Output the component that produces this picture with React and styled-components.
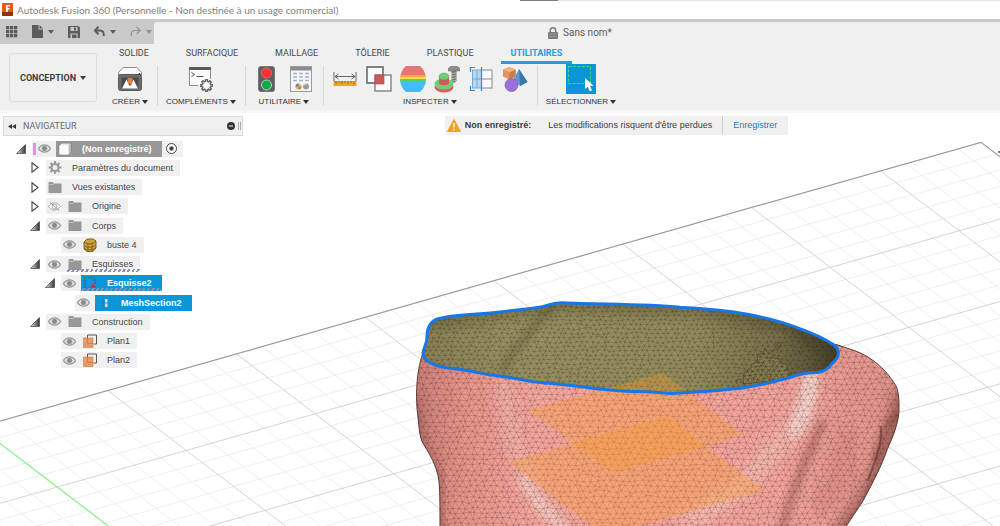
import React from "react";
import styled, { createGlobalStyle, css } from "styled-components";

const GlobalStyle = createGlobalStyle`
  *, *::before, *::after { box-sizing: border-box; }
  html, body { margin: 0; height: 100%; }
  #root { height: 100%; }
  body { background: #fff; font-family: "Liberation Sans", Arial, sans-serif; color: #3c3c3c; }
  button { font: inherit; color: inherit; background: none; border: 0; padding: 0; margin: 0; cursor: pointer; }
  ul { list-style: none; margin: 0; padding: 0; }
  svg { display: block; flex: none; }
`;

const Page = styled.div`
  display: flex;
  flex-direction: column;
  min-height: 100%;
`;

/* ---------- Title bar ---------- */

const WindowEdge = styled.div`
  display: grid;
  grid-template-columns: 52% 38px 1fr;
  height: 1px;
  span:nth-child(2) { background: #7d7d7d; }
  span:nth-child(3) { background: #e4e4e4; }
`;

const TitleBar = styled.header`
  display: flex;
  align-items: center;
  gap: 4px;
  height: 18px;
  padding-left: 2px;
  background: #fff;
  color: #808080;
  font: 10px/16px Lato, "Noto Sans", sans-serif;
`;

/* ---------- Quick access bar ---------- */

const QuickBar = styled.div`
  display: flex;
  height: 25px;
  padding-top: 3px;
  background: #c9c9c9;
`;

const QuickTools = styled.div`
  display: flex;
  align-items: center;
  gap: 14px;
  width: 154px;
  padding: 0 0 3px 6px;
`;

const QuickButton = styled.button`
  display: flex;
  align-items: center;
  gap: 5px;
  color: ${(p) => (p.$faded ? "#929292" : "#5c5c5c")};
`;

const Caret = styled.span`
  display: inline-block;
  border: 3px solid transparent;
  border-top: 4px solid currentColor;
  border-bottom: 0;
`;

const DocumentTab = styled.div`
  flex: 1;
  display: flex;
  align-items: center;
  justify-content: center;
  gap: 5px;
  padding-left: 6px;
  border-top-left-radius: 3px;
  background: #f0f0f0;
  color: #5c5c5c;
  font: 10px/14px Roboto, sans-serif;
`;

/* ---------- Ribbon ---------- */

const Ribbon = styled.div`
  display: grid;
  grid-template-columns: 103px 1fr;
  height: 69px;
  background: #f0f0f0;
  border-bottom: 3px solid #f5f5f5;
`;

const WorkspaceButton = styled.button`
  display: flex;
  align-items: center;
  justify-content: center;
  gap: 4px;
  height: 49px;
  margin: 9px 6px 0 9px;
  border: 1px solid #dedede;
  border-radius: 3px;
  font: bold 9px/12px Roboto, sans-serif;
`;

const Tabs = styled.nav`
  display: flex;
  gap: 17px;
  height: 20px;
  padding-left: 6px;
`;

const Tab = styled.button`
  height: 20px;
  padding: 0 10px;
  border-bottom: 3px solid transparent;
  color: #4a4a4a;
  font: 9px/18px Roboto, sans-serif;
  ${(p) => p.$active && css`
    color: #1f9ede;
    font-weight: bold;
    border-color: #1f9ede;
  `}
`;

const ToolRow = styled.div`
  display: flex;
`;

const ToolGroup = styled.section`
  display: flex;
  flex-direction: column;
  align-items: center;
  padding: 0 9px;
  position: relative;
  & + &::before {
    content: "";
    position: absolute;
    left: 0;
    top: 2px;
    width: 1px;
    height: 40px;
    background: #d8d8d8;
  }
`;

const ToolIcons = styled.div`
  display: flex;
  align-items: center;
  gap: 8px;
  height: 30px;
`;

const ToolButton = styled.button`
  display: grid;
  place-items: center;
  width: ${(p) => (p.$selected ? 30 : 26)}px;
  height: 30px;
  background: ${(p) => (p.$selected ? "#0a96d9" : "transparent")};
`;

const GroupMenu = styled.button`
  display: flex;
  align-items: center;
  gap: 2px;
  color: #333;
  font: 8px/16px "Liberation Sans", Arial, sans-serif;
`;

/* ---------- Work area ---------- */

const WorkArea = styled.main`
  position: relative;
  flex: 1;
  display: grid;
  grid-template-columns: 243px 1fr;
  align-items: start;
  padding-top: 3px;
  overflow: hidden;
`;

const Canvas = styled.svg`
  position: absolute;
  inset: 0;
  width: 100%;
  height: 100%;
`;

const Navigator = styled.aside`
  position: relative;
  padding-left: 3px;
`;

const NavigatorHeader = styled.div`
  display: flex;
  align-items: center;
  gap: 7px;
  height: 20px;
  padding: 0 1px 0 4px;
  background: #f0f0f0;
  border: 1px solid #dadada;
  color: #6a6a6a;
  font: 9px/18px Roboto, sans-serif;
  h2 { flex: 1; margin: 0; font: inherit; }
`;

const Tree = styled.ul`
  display: grid;
  grid-auto-rows: 1fr;
  height: 231px;
  margin-top: 3px;
`;

const Row = styled.li`
  display: flex;
  align-items: center;
  padding-left: ${(p) => p.$indent}px;
`;

const Twist = styled.button`
  display: grid;
  place-items: center;
  width: 10px;
  height: 12px;
  margin-right: 6px;
`;

const Chip = styled.div`
  display: flex;
  align-items: center;
  height: 16px;
  background: #f0f0f0;
`;

const Mark = styled.span`
  width: 3px;
  height: 12px;
  margin-left: 1px;
  background: #e78ee7;
`;

const EyeButton = styled.button`
  display: grid;
  place-items: center start;
  width: 20px;
  height: 16px;
  padding-left: 2px;
`;

const ItemLabel = styled.div`
  position: relative;
  display: flex;
  align-items: center;
  gap: 10px;
  height: 16px;
  padding: 0 7px 0 2px;
  font: 9px/16px "Liberation Sans", Arial, sans-serif;
  white-space: nowrap;
  color: #444;
  ${(p) => p.$tone && css`
    padding-right: 10px;
    background: ${p.$tone};
    color: #fff;
    font-weight: bold;
  `}
  ${(p) => p.$hatched && css`
    &::after {
      content: "";
      position: absolute;
      inset: auto 0 0 0;
      height: 3px;
      background: repeating-linear-gradient(120deg, transparent 0 2px, #8793b4 2px 4px);
    }
  `}
`;

const ActiveRadio = styled.input`
  appearance: none;
  width: 11px;
  height: 11px;
  margin: 0 6px 0 4px;
  border: 1px solid #444;
  border-radius: 50%;
  background: radial-gradient(circle, #333 0 1px, #fff 3px);
`;

const Notice = styled.div`
  position: relative;
  justify-self: center;
  display: flex;
  align-items: center;
  height: 19px;
  margin-right: 10px;
  padding: 0 11px 0 2px;
  background: #f0f0f0;
  font: 9px/19px "Liberation Sans", Arial, sans-serif;
  strong { margin: 0 17px 0 4px; }
  a {
    margin-left: 10px;
    padding-left: 10px;
    border-left: 1px solid #cfcfcf;
    color: #1b7fc0;
    text-decoration: none;
  }
`;

/* ---------- Icons ---------- */

const AppLogo = () => (
  <svg width="11" height="14" viewBox="0 0 11 14">
    <rect width="11" height="13" rx="1" fill="#e8590c" />
    <path d="M0 9h11v3a1 1 0 0 1-1 1H1a1 1 0 0 1-1-1z" fill="#8f3206" />
    <path d="M4 2h4v1.6H5.700v1.400H7.600v1.500H5.700V9H4z" fill="#fff" />
  </svg>
);

const GridIcon = () => (
  <svg width="12" height="12" viewBox="0 0 12 12" fill="currentColor">
    {[0, 4, 8].map((y) => [0, 4, 8].map((x) => <rect key={x + "-" + y} x={x} y={y} width="3.300" height="3.300" />))}
  </svg>
);

const FileIcon = () => (
  <svg width="11" height="13" viewBox="0 0 11 13" fill="currentColor">
    <path d="M0 0h6.500v4.500H11V13H0z" />
    <path d="M7.500 0 11 3.500H7.500z" />
  </svg>
);

const SaveIcon = () => (
  <svg width="12" height="12" viewBox="0 0 12 12">
    <path d="M0 0h10.500L12 1.500V12H0z" fill="currentColor" />
    <path d="M2.500 1h7v4h-7zM2.500 7.500h7V12h-7z" fill="#c9c9c9" />
    <path d="M6 1.500h2v3H6zM4 8.500h4.500V12H4z" fill="currentColor" />
  </svg>
);

const UndoIcon = ({ flip }) => (
  <svg width="11" height="11" viewBox="0 0 11 11">
    <g transform={flip ? "matrix(-1 0 0 1 11 0)" : undefined}>
      <path d="M1.500 4.500H6c2.800 0 4 1.800 3.800 5.500" fill="none" stroke="currentColor" strokeWidth={flip ? 1.200 : 2} />
      <path d="M4.500.8.900 4.500l3.600 3.700" fill="none" stroke="currentColor" strokeWidth={flip ? 1.200 : 2} />
    </g>
  </svg>
);

const LockIcon = () => (
  <svg width="10" height="12" viewBox="0 0 10 12">
    <path d="M2.300 5V3.500a2.700 2.700 0 0 1 5.400 0V5" fill="none" stroke="#7c7c7c" strokeWidth="1.500" />
    <rect y="5" width="10" height="7" rx="1" fill="#7c7c7c" />
    <path d="M1 7h8M1 9.500h8" stroke="#a9a9a9" strokeWidth=".7" />
  </svg>
);

const CreateIcon = () => (
  <svg width="26" height="26" viewBox="0 0 26 26">
    <path d="M1.500 9V6.500L6 1.500h14l4.500 5V9z" fill="#fafafa" stroke="#8a8a8a" />
    <rect x="1.500" y="8.500" width="23" height="16" rx="2" fill="#6c6c6c" stroke="#595959" />
    <rect x="4.500" y="11.500" width="17" height="11" fill="#4b4b4b" />
    <path d="M5 22.500 9.500 13.500l2.500 5.500 1 1 1-1 2.500-5.500 4.500 9z" fill="#fff" />
    <path d="M10.500 12h5v4L13 19l-2.500-3z" fill="#e98036" />
    <circle cx="22.500" cy="8" r="1" fill="#333" />
  </svg>
);

const gearPath = (cx, cy, outer, inner, teeth) => {
  const pts = [];
  for (let i = 0; i < teeth; i++) {
    [[-0.32, inner], [-0.2, outer], [0.2, outer], [0.32, inner]].forEach(([o, r]) => {
      const a = ((i + o) / teeth) * Math.PI * 2;
      pts.push(`${(cx + Math.cos(a) * r).toFixed(2)} ${(cy + Math.sin(a) * r).toFixed(2)}`);
    });
  }
  return `M${pts.join("L")}Z`;
};

const ScriptIcon = () => (
  <svg width="26" height="26" viewBox="0 0 26 26">
    <rect x="1.500" y="1.500" width="21" height="18" fill="#fafafa" />
    <path d="M1.500 19.500v-18h21V13M1.500 19.500h9" fill="none" stroke="#8c8c8c" />
    <rect x="1" y="1" width="22" height="3" fill="#595959" />
    <path d="m3.500 6.500 3 2-3 2M8.500 10.500h7" fill="none" stroke="#555" />
    <path d={gearPath(18.500, 19.500, 5.800, 4.300, 8)} fill="#f5f5f5" stroke="#686868" strokeWidth="1.500" />
    <circle cx="18.500" cy="19.500" r="1.800" fill="#fff" />
  </svg>
);

const TrafficIcon = () => (
  <svg width="17" height="26" viewBox="0 0 17 26">
    <rect x=".5" y=".5" width="16" height="25" rx="2.500" fill="#5f5f5f" stroke="#777" />
    <circle cx="8.500" cy="7" r="5" fill="#fb3030" stroke="#ff8080" strokeWidth=".6" />
    <circle cx="8.500" cy="19" r="5" fill="#17a74b" stroke="#c9efd5" strokeWidth=".8" />
  </svg>
);

const SheetIcon = () => (
  <svg width="22" height="26" viewBox="0 0 22 26">
    <rect x=".5" y=".5" width="21" height="25" fill="#f7f7f7" stroke="#9a9a9a" />
    <rect x="1" y="1" width="20" height="3.500" fill="#8c8c8c" />
    <path d="M3 7.500h4M9 7.500h4M15 7.500h4M3 11h4M9 11h4M15 11h4M3 14.500h4M9 14.500h4M15 14.500h4" stroke="#9fb2cd" strokeWidth="1.500" />
    <circle cx="8.500" cy="20.500" r="3" fill="#d5c24a" />
    <path d="M8.500 20.500v-3a3 3 0 0 0-3 3z" fill="#7b68c9" />
    <path d="M8.500 20.500h3a3 3 0 0 1-3 3z" fill="#d26c5c" />
    <circle cx="16" cy="20.500" r="3" fill="#9a9a9a" />
    <path d="M14 19.500a2.500 2.500 0 0 1 3-1.500" stroke="#ddd" fill="none" />
  </svg>
);

const MeasureIcon = () => (
  <svg width="24" height="26" viewBox="0 0 24 26">
    <path d="M1 6v9M23 6v9M2 10.500h20M5.500 8 2 10.500 5.500 13M18.500 8l3.500 2.500-3.500 2.500" fill="none" stroke="#666" />
    <rect x=".5" y="15" width="23" height="5" fill="#f5a31d" />
    <path d="M3 15v3M6 15v2M9 15v3M12 15v2M15 15v3M18 15v2M21 15v3" stroke="#8a5b0c" strokeWidth=".8" />
  </svg>
);

const InterfereIcon = () => (
  <svg width="26" height="26" viewBox="0 0 26 26">
    <rect x="1" y="1" width="16" height="16" fill="#fafafa" stroke="#777" strokeWidth="1.300" />
    <rect x="9" y="9" width="16" height="16" fill="#fafafa" stroke="#777" strokeWidth="1.300" />
    <path d="M9 17H1V1h16v8" fill="none" stroke="#777" strokeWidth="1.300" />
    <rect x="9" y="9" width="9" height="9" fill="#cd5a59" stroke="#a94847" strokeWidth=".6" />
  </svg>
);

const CurvatureIcon = () => (
  <svg width="26" height="26" viewBox="0 0 26 26">
    <defs>
      <clipPath id="barrel"><path d="M6 0h14c3.500 3 6 8 6 13s-2.500 10-6 13H6c-3.500-3-6-8-6-13S2.500 3 6 0z" /></clipPath>
    </defs>
    <g clipPath="url(#barrel)">
      <rect width="26" height="9" fill="#e97473" />
      <rect y="9" width="26" height="2.200" fill="#f2a25c" />
      <rect y="11" width="26" height="2" fill="#f2e13c" />
      <rect y="13" width="26" height="2" fill="#56cf66" />
      <rect y="15" width="26" height="11" fill="#43bdf5" />
    </g>
  </svg>
);

const ThreadIcon = () => (
  <svg width="26" height="27" viewBox="0 0 26 27">
    <ellipse cx="10" cy="21" rx="9.500" ry="5.500" fill="#d95f62" />
    <ellipse cx="10" cy="18" rx="9.500" ry="5.500" fill="#6dd077" />
    <path d="M5 11v6c0 3 10 3 10 0v-6z" fill="#cf595c" />
    <ellipse cx="10" cy="10.500" rx="5" ry="3.500" fill="#6dd077" stroke="#4aa558" strokeWidth=".5" />
    <path d="M14.500 2 17 .5h6L25.500 2v3H14.500z" fill="#8f8f8f" stroke="#666" strokeWidth=".6" />
    <path d="M17.500 5h5v10l-2.500 2-2.500-2z" fill="#777" />
    <path d="m17 8 6-1.500M17 10.500 23 9M17 13l6-1.500M17 15.500l6-1.500" stroke="#bbb" strokeWidth=".9" />
  </svg>
);

const SectionIcon = () => (
  <svg width="24" height="26" viewBox="0 0 24 26">
    <rect x="12" y="4" width="11" height="18" fill="#fafafa" stroke="#8a8a8a" />
    <path d="M12 13h11" stroke="#8a8a8a" />
    <rect x="3.500" y="4" width="9" height="18" fill="#b7d8f0" stroke="#72abd6" />
    <path d="M3.500 13h9M8 4v18" stroke="#72abd6" />
    <path d="M6 1.500H1.500V6M1.500 20v4.500H6M12.500 1v24" fill="none" stroke="#2a8ddb" strokeWidth="1.200" />
  </svg>
);

const ShapesIcon = () => (
  <svg width="26" height="26" viewBox="0 0 26 26">
    <path d="m7.500 1 6 2.500v7l-6 3-6.500-3v-7z" fill="#df9461" />
    <path d="m7.500 6.500 6-3v7l-6 3z" fill="#c97c49" />
    <path d="m1 3.500 6.500-2.500 6 2.500-6 3z" fill="#f0b184" />
    <path d="m17 3 8.500 13-7.500 4-7-6z" fill="#5f9ccb" />
    <path d="m17 3 8.500 13-7.500 4z" fill="#3b78a9" />
    <circle cx="9.500" cy="19" r="6.500" fill="#9d6fdb" stroke="#8055bf" strokeWidth=".7" />
  </svg>
);

const SelectIcon = () => (
  <svg width="30" height="30" viewBox="0 0 30 30">
    <rect x="2.500" y="2.500" width="22" height="17" fill="none" stroke="#45d384" strokeDasharray="3 1.500" />
    <path d="M19 14v11l2.700-2.300 2 4.500 2.300-1-2-4.400h3.500z" fill="#fff" />
  </svg>
);

const CollapseIcon = () => (
  <svg width="8" height="5" viewBox="0 0 8 5"><path d="M4 0v5L0 2.500zM8 0v5L4 2.500z" fill="#333" /></svg>
);

const TwistOpen = () => (
  <svg width="10" height="10" viewBox="0 0 10 10">
    <defs><linearGradient id="twist"><stop offset="0" stopColor="#e8e8e8" /><stop offset="1" stopColor="#333" /></linearGradient></defs>
    <path d="M.5 9.500h9V.500z" fill="url(#twist)" stroke="#555" strokeWidth=".8" />
  </svg>
);

const TwistClosed = () => (
  <svg width="8" height="11" viewBox="0 0 8 11"><path d="M1 .8 7 5.500 1 10.200z" fill="#fff" stroke="#444" strokeWidth="1.100" /></svg>
);

const EyeIcon = ({ hidden }) => (
  <svg width="13" height="9" viewBox="0 0 13 9">
    <path d="M.5 4.500C3.500-.3 9.500-.3 12.500 4.500 9.500 9.300 3.500 9.300.5 4.500z" fill={hidden ? "#fafafa" : "#e2e2e2"} stroke="#999" strokeWidth={hidden ? 0.8 : 1.300} />
    <circle cx="6.500" cy="4.500" r="2.400" fill={hidden ? "none" : "#8a8a8a"} stroke="#999" strokeWidth=".8" />
    {hidden && <path d="m2 .5 9 8" stroke="#999" />}
  </svg>
);

const FolderIcon = () => (
  <svg width="14" height="11" viewBox="0 0 14 11">
    <path d="M.5 1 1 0h4l.8 1.500h7.700V11H.5z" fill="#989898" />
    <path d="M.5 2.500h5l1-1" stroke="#ccc" strokeWidth=".7" fill="none" />
  </svg>
);

const GearIcon = () => (
  <svg width="14" height="13" viewBox="0 0 14 13">
    <path d={gearPath(7, 6.500, 6.400, 4.500, 8)} fill="#979797" />
    <circle cx="7" cy="6.500" r="2.500" fill="#f0f0f0" />
  </svg>
);

const CubeIcon = () => (
  <svg width="14" height="14" viewBox="0 0 14 14">
    <path d="M1 3.500 3.500 1H13v9.500L10.500 13H1z" fill="#e6e8ea" stroke="#6f7880" strokeWidth=".8" strokeLinejoin="round" />
    <path d="M10.500 3.500 13 1v9.500L10.500 13z" fill="#b4bbc2" />
    <rect x="1.500" y="3.500" width="9" height="9" rx="1" fill="#fcfcfc" />
  </svg>
);

const MeshBodyIcon = () => (
  <svg width="14" height="14" viewBox="0 0 14 14">
    <path d="M1 4 4 1h6l3 2v7l-3 3.500H4L1 11z" fill="#c9a53c" stroke="#75591a" strokeWidth=".9" />
    <path d="M1 4c3 2.500 9 2.500 12-1M1 7.500c3 2.500 9 2.500 12-1M1 10.500c3 2 9 2 12-1M5 5v8M9 5v8" fill="none" stroke="#75591a" strokeWidth=".8" />
  </svg>
);

const SketchIcon = () => (
  <svg width="14" height="14" viewBox="0 0 14 14">
    <path d="M2 12V2h10v6" fill="none" stroke="#35617f" strokeWidth="1.200" strokeDasharray="2 1" />
    <path d="M6 11h4M9.500 8l3 3-3 3z" stroke="#bc3348" fill="#bc3348" />
  </svg>
);

const MeshSectionIcon = () => (
  <svg width="14" height="14" viewBox="0 0 14 14">
    <path d="M6 2v10" stroke="#3173c4" />
    <path d="M8 3h2.500v3.500H8zM8 7.500h2.500V11H8z" fill="#d3dde4" />
  </svg>
);

const PlaneIcon = () => (
  <svg width="14" height="14" viewBox="0 0 14 14">
    <path d="M4.500 4V1h9v9h-3" fill="none" stroke="#555" />
    <rect x=".5" y="4" width="9.500" height="9.500" fill="#e99a68" stroke="#cf7b45" strokeWidth=".6" />
    <path d="M4.500 4v5.500H10" fill="none" stroke="#c4713c" strokeWidth=".7" />
  </svg>
);

const WarningIcon = () => (
  <svg width="14" height="13" viewBox="0 0 14 13">
    <path d="M7 .5 13.500 12.500H.5z" fill="#f5a11c" stroke="#f5a11c" strokeLinejoin="round" />
    <path d="M7 4v4.500M7 9.800v1.400" stroke="#fff" strokeWidth="1.400" />
  </svg>
);

/* ---------- 3D view ---------- */

const EDGE_SLOPE = -0.2842;
const COLUMN_SLOPE = 0.762;
const CORNER = { x: 981, y: 142.3 };
const edgeY = (x) => CORNER.y + (x - CORNER.x) * EDGE_SLOPE;

const gridLines = () => {
  const major = [];
  const minor = [];
  for (let i = -45; i < 36; i++) {
    const x = 107.7 + i * 25.76;
    if (x > CORNER.x) continue;
    const y = edgeY(x);
    (i % 5 === 0 ? major : minor).push(`M${x.toFixed(1)} ${y.toFixed(1)}l700 ${(700 * COLUMN_SLOPE).toFixed(1)}`);
  }
  for (let j = 1; j < 45; j++) {
    const drop = j * 16.46;
    const reach = drop / (COLUMN_SLOPE - EDGE_SLOPE);
    const endX = CORNER.x + reach;
    (j % 5 === 0 ? major : minor).push(
      `M-10 ${(edgeY(-10) + drop).toFixed(1)}L${endX.toFixed(1)} ${(edgeY(endX) + drop).toFixed(1)}`
    );
  }
  return { major: major.join(""), minor: minor.join("") };
};

const triangleMesh = (x0, y0, x1, y1, step, rise, seed) => {
  let s = seed;
  const rand = () => {
    s = (s * 16807) % 2147483647;
    return s / 2147483647 - 0.5;
  };
  const rows = Math.ceil((y1 - y0) / rise) + 1;
  const cols = Math.ceil((x1 - x0) / step) + 1;
  const pts = [];
  for (let r = 0; r < rows; r++) {
    pts.push([]);
    for (let c = 0; c < cols; c++) {
      const x = x0 + (c + (r % 2 ? 0.5 : 0)) * step + rand() * step * 0.5;
      const y = y0 + r * rise + rand() * rise * 0.5;
      pts[r].push(`${x.toFixed(1)} ${y.toFixed(1)}`);
    }
  }
  let d = "";
  for (let r = 0; r < rows; r++) {
    d += `M${pts[r].join("L")}`;
    if (r + 1 === rows) break;
    const zig = [];
    for (let c = 0; c < cols; c++) {
      if (r % 2) zig.push(pts[r + 1][c], pts[r][c]);
      else zig.push(pts[r][c], pts[r + 1][c]);
    }
    d += `M${zig.join("L")}`;
  }
  return d;
};

const grid = gridLines();
const bodyMesh = triangleMesh(408, 335, 910, 530, 6.400, 5.400, 77);
const innerMesh = triangleMesh(415, 298, 845, 400, 5.400, 4.400, 913);

const RIM =
  "M423 353C424 346 427 344 427 337C427 328 430 321 439 318.500C455 314 480 314.500 500 312C520 309.500 535 308.500 543 306.500C550 304.500 556 302.500 563 302.800C600 304.500 645 304 680 307.300C705 308.500 727 310.500 746 314C768 318 783 322 797 327.700C812 333 828 341 834 345C840 350 840 357 833 362.500C828 369 824 372 817 372.500C803 373 798 374.500 787 378.300C770 383 750 387.500 730 389.300C710 391.500 693 392.500 672 393.500C660 393 655 391.500 645 391.700C622 392 600 389 583 387C565 384.500 550 383.500 533 381.700C515 378.500 505 376 490 375C480 373 465 369.500 450 368.300C437 366.500 423 363 423 353Z";
const BODY =
  "M424 350C416 370 416 395 417 408C419 425 419 438 424 445C432 458 439 470 439.500 488C440 500 440 515 440 530H844C853 515 861 505 864 499C873 482 882 465 887 450C893 436 898 425 899 411C899 400 899 393 896 386C890 376 882 366 868 357C858 351 849 349 838 345L760 330H440Z";
const LUMP =
  "M743 384 744 372 750 369 752 364 757 362 758 355 763 353 765 348 767 352 772 354 773 358 779 359 783 364 788 365 786 369 790 373 789 379Z";

const Viewport = () => (
  <Canvas viewBox="0 113 1000 413" preserveAspectRatio="xMinYMin slice" role="img" aria-label="Vue 3D du corps maillé">
    <defs>
      <clipPath id="bodyClip"><path d={BODY} /></clipPath>
      <clipPath id="rimClip"><path d={RIM} /></clipPath>
      <clipPath id="lumpClip"><path d={LUMP} /></clipPath>
      <linearGradient id="skin">
        <stop offset="0" stopColor="#cc8078" />
        <stop offset=".1" stopColor="#e8968c" />
        <stop offset=".25" stopColor="#f5a89f" />
        <stop offset=".75" stopColor="#f4a59d" />
        <stop offset="1" stopColor="#e0948a" />
      </linearGradient>
      <linearGradient id="hollow" x2="1">
        <stop offset="0" stopColor="#8b8356" />
        <stop offset=".2" stopColor="#9b9262" />
        <stop offset=".65" stopColor="#978e5f" />
        <stop offset=".85" stopColor="#7a724c" />
        <stop offset="1" stopColor="#4c472f" />
      </linearGradient>
      <filter id="soft3" x="-30%" y="-30%" width="160%" height="160%"><feGaussianBlur stdDeviation="3" /></filter>
      <filter id="soft7" x="-30%" y="-30%" width="160%" height="160%"><feGaussianBlur stdDeviation="7" /></filter>
    </defs>

    <path d={grid.minor} stroke="#efefef" fill="none" />
    <path d={grid.major} stroke="#cfcfcf" strokeWidth=".9" fill="none" />
    <path d={`M-10 ${edgeY(-10)}L${CORNER.x} ${CORNER.y}l60 46`} stroke="#9a9a9a" strokeWidth="1.200" fill="none" />
    <path d="M-21.500 427.100 130 542.600" stroke="#8df58d" strokeWidth="1.200" />
    <path d="M998 152h2" stroke="#777" strokeWidth="2" />

    <g clipPath="url(#bodyClip)">
      <path d={BODY} fill="url(#skin)" />
      <g fill="none" strokeLinecap="round" strokeLinejoin="round">
        <path d="M412 400 418 445 436 475 438 540" stroke="#7d4541" strokeWidth="10" opacity=".6" filter="url(#soft7)" />
        <path d="M503 384 512 440 533 490 562 530" stroke="#f8d3cf" strokeWidth="13" opacity=".4" filter="url(#soft7)" />
        <path d="M522 480 540 505 565 530" stroke="#f6d9d5" strokeWidth="11" opacity=".5" filter="url(#soft3)" />
        <path d="M812 378 803 418 778 445 745 483 690 522" stroke="#f8d2ca" strokeWidth="18" opacity=".5" filter="url(#soft7)" />
        <path d="M812 380 808 397 801 418 795 430" stroke="#f6ded9" strokeWidth="16" opacity=".7" filter="url(#soft3)" />
        <path d="M822 424 803 467 789 505 782 530" stroke="#8c4f49" strokeWidth="9" opacity=".45" filter="url(#soft3)" />
        <path d="M904 400 898 440 867 505 845 535" stroke="#6e3834" strokeWidth="20" opacity=".65" filter="url(#soft7)" />
        <path d="M899 415 888 422 884 435 876 460" stroke="#703b36" strokeWidth="5" opacity=".6" filter="url(#soft3)" />
        <path d="M881 427 Q882 440 877 455 T868 480" stroke="#4f2724" strokeWidth="2" opacity=".5" />
        <path d="M820 500 838 480 848 440" stroke="#cf7e77" strokeWidth="25" opacity=".4" filter="url(#soft7)" />
      </g>
      <path d={bodyMesh} stroke="#4f2b24" strokeWidth=".5" strokeOpacity=".45" fill="none" />
    </g>
    <path d={BODY} fill="none" stroke="#5a3734" strokeWidth="1" />

    <g clipPath="url(#rimClip)">
      <path d={RIM} fill="url(#hollow)" />
      <g fill="none" stroke="#3b3621">
        <path d="M428 318 560 302 700 307 800 325" strokeWidth="16" opacity=".35" filter="url(#soft7)" />
        <path d="M552 305 536 325 514 350 503 372" strokeWidth="8" opacity=".25" filter="url(#soft3)" />
        <path d="M795 330 840 352 825 372" strokeWidth="14" opacity=".5" filter="url(#soft7)" />
      </g>
      <path d={innerMesh} stroke="#2f2b19" strokeWidth=".5" strokeOpacity=".45" fill="none" />
      <path d={LUMP} fill="#8c8358" stroke="#4b452c" strokeWidth=".6" />
      <g clipPath="url(#lumpClip)">
        <path d={innerMesh} transform="translate(3 2)" stroke="#2f2b19" strokeWidth=".5" strokeOpacity=".6" fill="none" />
        <path d={innerMesh} transform="translate(0 -1)" stroke="#2f2b19" strokeWidth=".5" strokeOpacity=".3" fill="none" />
      </g>
      <path d="M773 352 779 341 781 346 776 349M737 384 736 380 742 379" fill="none" stroke="#4b452c" strokeWidth=".7" />
    </g>

    <g fill="#f89c24" fillOpacity=".3">
      <path d="M528 410 663 373 744 435 613 472.500Z" />
      <path d="M508 462 667 416 764 490 605 536Z" />
    </g>
    <path d={RIM} fill="none" stroke="#1877e6" strokeWidth="3" strokeLinejoin="round" />
  </Canvas>
);

/* ---------- Data ---------- */

const TABS = ["SOLIDE", "SURFACIQUE", "MAILLAGE", "TÔLERIE", "PLASTIQUE", "UTILITAIRES"];

const GROUPS = [
  { label: "CRÉER", tools: [["Créer", CreateIcon]] },
  { label: "COMPLÉMENTS", tools: [["Scripts et compléments", ScriptIcon]] },
  { label: "UTILITAIRE", tools: [["État", TrafficIcon], ["Tableau", SheetIcon]] },
  {
    label: "INSPECTER",
    tools: [
      ["Mesurer", MeasureIcon],
      ["Interférence", InterfereIcon],
      ["Courbure", CurvatureIcon],
      ["Filetage", ThreadIcon],
      ["Section", SectionIcon],
      ["Composants", ShapesIcon],
    ],
  },
  { label: "SÉLECTIONNER", tools: [["Sélectionner", SelectIcon]], selected: true },
];

const BLUE = "#0a96d9";
const INDENTS = [13, 27, 42, 56];

const ITEMS = [
  { label: "(Non enregistré)", level: 0, twist: "open", eye: "on", Icon: CubeIcon, tone: "#989898", root: true },
  { label: "Paramètres du document", level: 1, twist: "closed", Icon: GearIcon },
  { label: "Vues existantes", level: 1, twist: "closed", Icon: FolderIcon },
  { label: "Origine", level: 1, twist: "closed", eye: "off", Icon: FolderIcon },
  { label: "Corps", level: 1, twist: "open", eye: "on", Icon: FolderIcon },
  { label: "buste 4", level: 2, eye: "on", Icon: MeshBodyIcon },
  { label: "Esquisses", level: 1, twist: "open", eye: "on", Icon: FolderIcon, hatched: true },
  { label: "Esquisse2", level: 2, twist: "open", eye: "on", Icon: SketchIcon, tone: BLUE, hatched: true },
  { label: "MeshSection2", level: 3, eye: "on", Icon: MeshSectionIcon, tone: BLUE },
  { label: "Construction", level: 1, twist: "open", eye: "on", Icon: FolderIcon },
  { label: "Plan1", level: 2, eye: "on", Icon: PlaneIcon },
  { label: "Plan2", level: 2, eye: "on", Icon: PlaneIcon },
];

const TreeRow = ({ item }) => (
  <Row $indent={INDENTS[item.level]}>
    <Twist as={item.twist ? "button" : "span"} aria-label={item.twist ? `Développer ${item.label}` : undefined}>
      {item.twist === "open" && <TwistOpen />}
      {item.twist === "closed" && <TwistClosed />}
    </Twist>
    <Chip>
      {item.root && <Mark />}
      {item.eye && (
        <EyeButton aria-label={`Visibilité de ${item.label}`}>
          <EyeIcon hidden={item.eye === "off"} />
        </EyeButton>
      )}
      <ItemLabel $tone={item.tone} $hatched={item.hatched}>
        <item.Icon />
        {item.label}
      </ItemLabel>
      {item.root && <ActiveRadio type="radio" defaultChecked aria-label="Composant actif" />}
    </Chip>
  </Row>
);

export default function App() {
  return (
    <Page>
      <GlobalStyle />
      <WindowEdge><span /><span /><span /></WindowEdge>
      <TitleBar>
        <AppLogo />
        Autodesk Fusion 360 (Personnelle - Non destinée à un usage commercial)
      </TitleBar>
      <QuickBar>
        <QuickTools>
          <QuickButton aria-label="Panneau de données"><GridIcon /></QuickButton>
          <QuickButton aria-label="Fichier"><FileIcon /><Caret /></QuickButton>
          <QuickButton aria-label="Enregistrer"><SaveIcon /></QuickButton>
          <QuickButton aria-label="Annuler"><UndoIcon /><Caret /></QuickButton>
          <QuickButton aria-label="Rétablir" $faded><UndoIcon flip /><Caret /></QuickButton>
        </QuickTools>
        <DocumentTab><LockIcon />Sans nom*</DocumentTab>
      </QuickBar>
      <Ribbon>
        <WorkspaceButton>CONCEPTION<Caret /></WorkspaceButton>
        <div>
          <Tabs>
            {TABS.map((t) => <Tab key={t} $active={t === "UTILITAIRES"}>{t}</Tab>)}
          </Tabs>
          <ToolRow>
            {GROUPS.map((g) => (
              <ToolGroup key={g.label}>
                <ToolIcons>
                  {g.tools.map(([name, Icon]) => (
                    <ToolButton key={name} aria-label={name} $selected={g.selected}><Icon /></ToolButton>
                  ))}
                </ToolIcons>
                <GroupMenu>{g.label}<Caret /></GroupMenu>
              </ToolGroup>
            ))}
          </ToolRow>
        </div>
      </Ribbon>
      <WorkArea>
        <Viewport />
        <Navigator>
          <NavigatorHeader>
            <CollapseIcon />
            <h2>NAVIGATEUR</h2>
            <svg width="14" height="10" viewBox="0 0 14 10">
              <circle cx="4" cy="5" r="4" fill="#333" />
              <path d="M2 5h4" stroke="#ddd" strokeWidth="1.200" />
              <path d="M11.500 1v8M13.500 1v8" stroke="#aaa" />
            </svg>
          </NavigatorHeader>
          <Tree>
            {ITEMS.map((item) => <TreeRow key={item.label} item={item} />)}
          </Tree>
        </Navigator>
        <Notice role="status">
          <WarningIcon />
          <strong>Non enregistré:</strong>
          Les modifications risquent d'être perdues
          <a href="#enregistrer">Enregistrer</a>
        </Notice>
      </WorkArea>
    </Page>
  );
}
